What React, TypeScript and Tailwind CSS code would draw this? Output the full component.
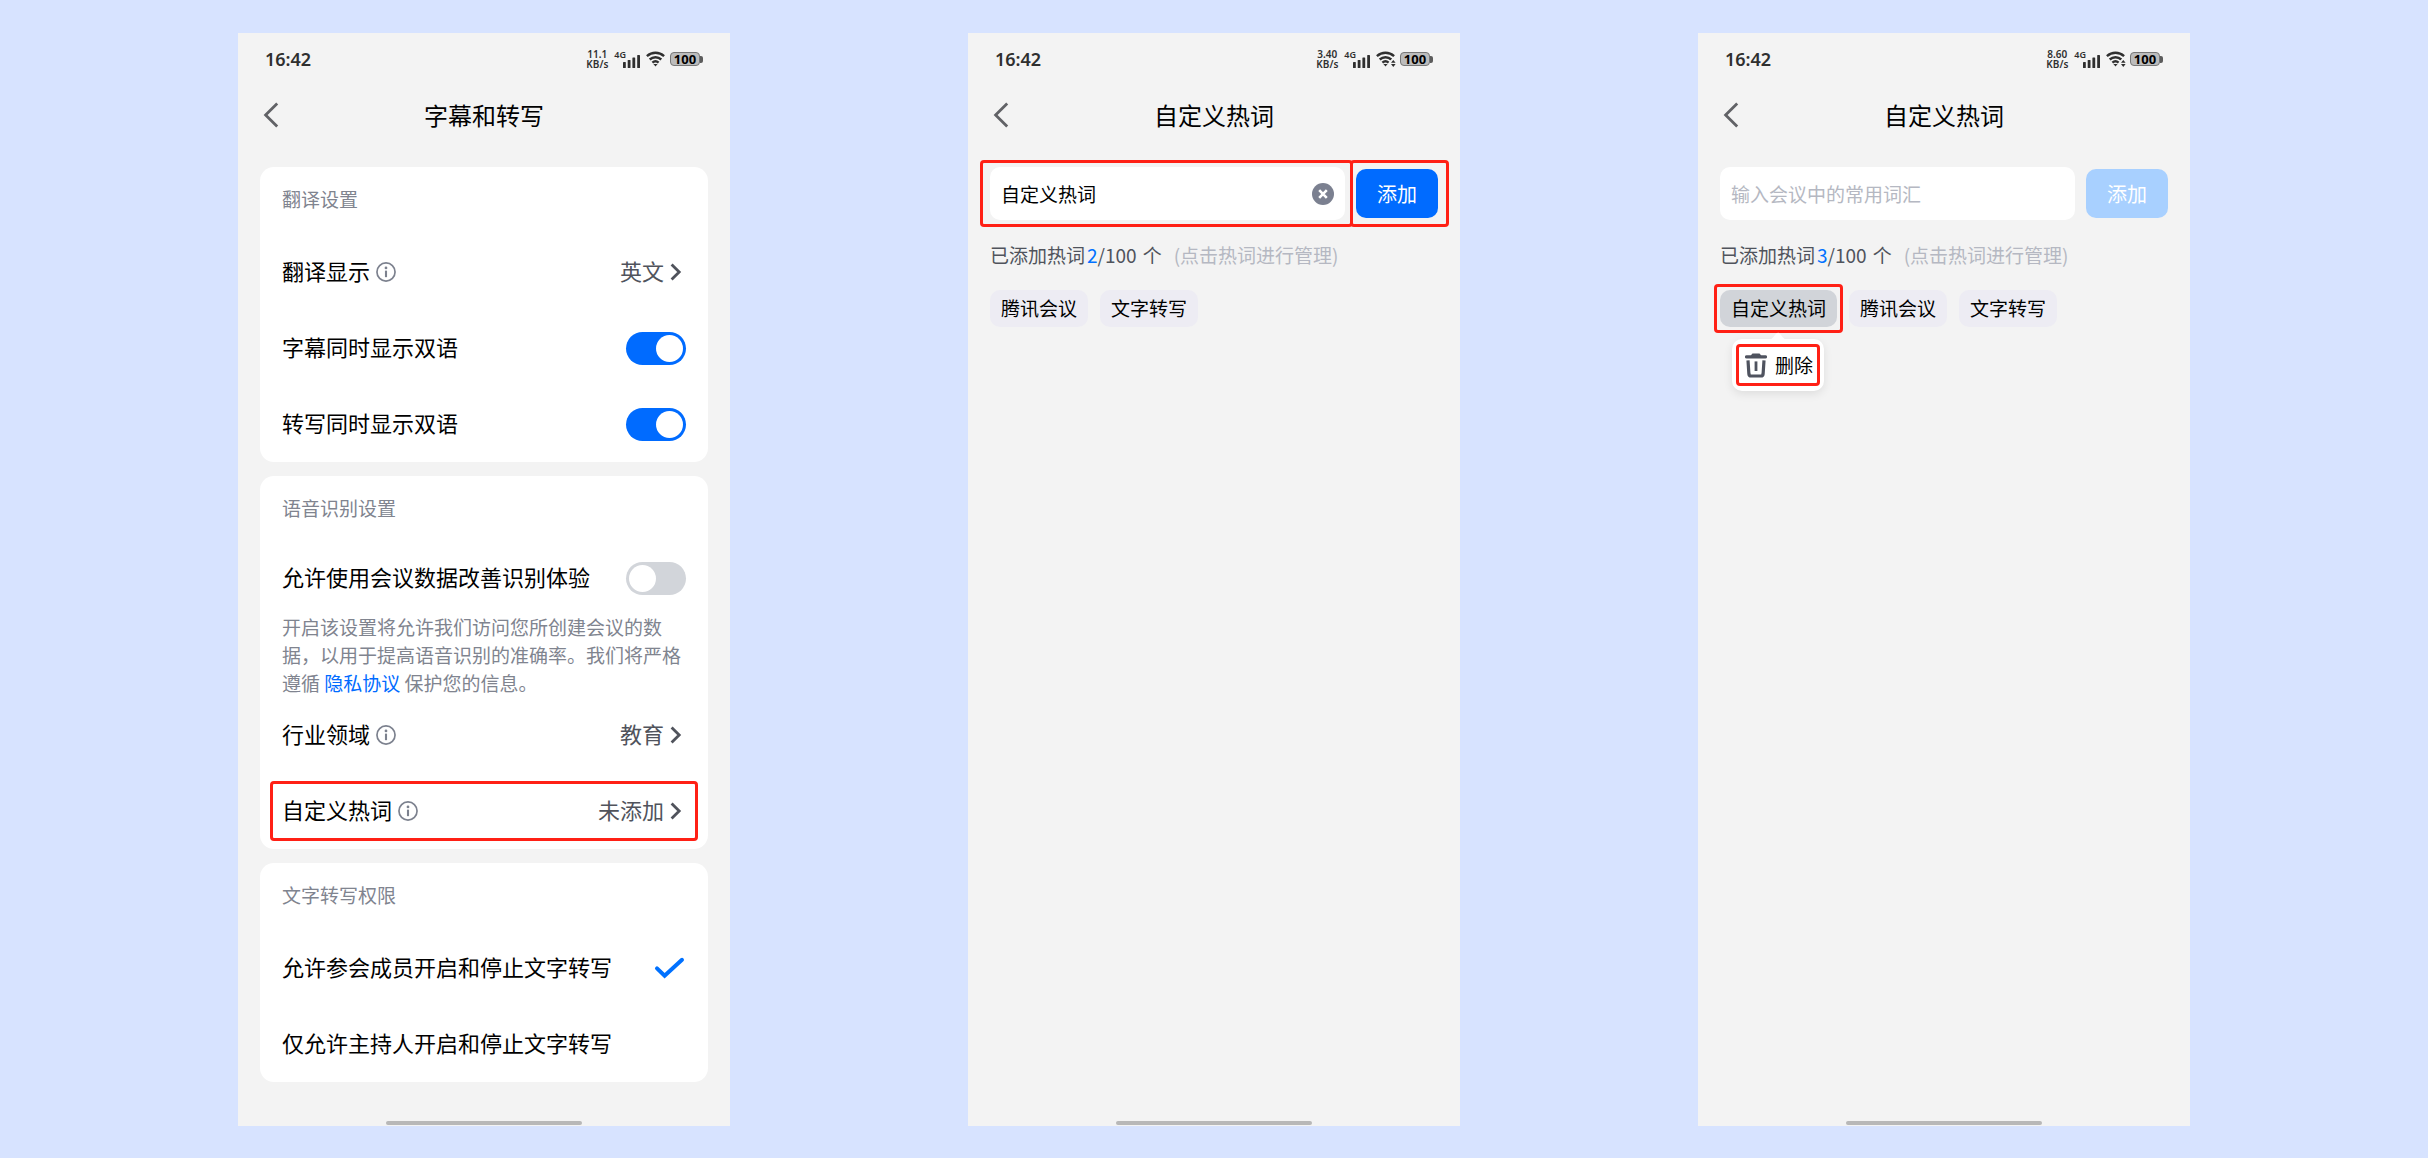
import { useState } from 'react';
import type { ReactNode } from 'react';

function Highlight({ className }: { className: string }) {
  return <span aria-hidden="true" className={`pointer-events-none absolute rounded-[4px] border-3 border-[#ff2015] ${className}`} />;
}

function WifiIcon({ active }: { active: boolean }) {
  return (
    <svg width="20" height="16" viewBox="0 0 20 16" fill="none" stroke="#2f2f2f" strokeWidth="2.4">
      <path d="M0.9 5.1C5.9 0.6 13.1 0.6 18.1 5.1" />
      <path d="M3.7 8.5C7.1 5.4 11.9 5.4 15.3 8.5" />
      <path d="M6.4 11.7C8.3 10 10.7 10 12.6 11.7" />
      <path d="M7.4 13L9.5 15.6L11.6 13Z" fill="#2f2f2f" stroke="none" />
      {active && (
        <>
          <circle cx="17.3" cy="12.4" r="3.9" fill="#f3f3f3" stroke="none" />
          <path d="M15 11.8L17.3 9L19.6 11.8ZM15 13.1L17.3 15.9L19.6 13.1Z" fill="#2f2f2f" stroke="none" />
        </>
      )}
    </svg>
  );
}

function StatusBar({ speed, active }: { speed: string; active: boolean }) {
  return (
    <div className="flex h-[52px] items-center justify-between px-[27px] font-['Noto_Sans','Open_Sans',sans-serif] text-[#2f2f2f]">
      <span className="text-lg font-semibold">16:42</span>
      <div className="flex items-center">
        <div className="flex flex-col items-center text-[10px] font-semibold leading-[10px]">
          <span>{speed}</span>
          <span>KB/s</span>
        </div>
        <div className="ml-1.5 flex h-[18px] items-end">
          <span className="-mr-[3px] self-start text-[9px] font-semibold leading-[9px]">4G</span>
          <svg width="17" height="13" viewBox="0 0 17 13" fill="#2f2f2f">
            <rect x="0" y="7" width="2.8" height="6" rx="0.6" />
            <rect x="4.7" y="5" width="2.8" height="8" rx="0.6" />
            <rect x="9.4" y="2.5" width="2.8" height="10.5" rx="0.6" />
            <rect x="14.2" y="0" width="2.8" height="13" rx="0.6" />
          </svg>
        </div>
        <div className="ml-1.5">
          <WifiIcon active={active} />
        </div>
        <div className="ml-1 flex items-center">
          <span className="flex h-3.5 w-[30px] items-center justify-center rounded-[4px] border border-[#777777] bg-[#bcbcbc] text-[13px] font-bold leading-none text-black">
            100
          </span>
          <span className="h-[7px] w-[3px] rounded-r-[2px] bg-[#5c5c5c]" />
        </div>
      </div>
    </div>
  );
}

function Phone({ title, speed, active = true, children }: { title: string; speed: string; active?: boolean; children: ReactNode }) {
  return (
    <section className="flex flex-col bg-[#f3f3f3]">
      <StatusBar speed={speed} active={active} />
      <header className="mb-[22px] grid h-[60px] grid-cols-[41px_1fr_41px] items-center">
        <button type="button" aria-label="返回" className="flex justify-end">
          <svg width="16" height="26" viewBox="0 0 16 26" fill="none" stroke="#616266" strokeWidth="2.8">
            <path d="M14.2 1.5L2.6 13L14.2 24.5" />
          </svg>
        </button>
        <h1 className="text-center text-2xl">{title}</h1>
      </header>
      <div className="flex-1 px-[22px] pb-9">{children}</div>
      <div className="mx-auto mb-px h-1 w-2/5 rounded-full bg-[#b8b8b8]" />
    </section>
  );
}

function Card({ title, children }: { title: string; children: ReactNode }) {
  return (
    <div className="rounded-[14px] bg-white px-[22px]">
      <h2 className="flex h-[67px] items-center pb-0.5 text-[19px] text-[#80848f]">{title}</h2>
      {children}
    </div>
  );
}

function SwitchRow({ label, on = false, className = 'h-[76px]' }: { label: string; on?: boolean; className?: string }) {
  const [checked, setChecked] = useState(on);

  return (
    <label className={`flex items-center justify-between ${className}`}>
      <span className="pb-1">{label}</span>
      <input
        type="checkbox"
        role="switch"
        checked={checked}
        onChange={(e) => setChecked(e.target.checked)}
        className="h-[33px] w-[60px] shrink-0 appearance-none rounded-full bg-[#d2d5da] p-[3px] before:block before:size-[27px] before:rounded-full before:bg-white checked:bg-[#006bff] checked:before:ml-[27px]"
      />
    </label>
  );
}

function LinkRow({ label, value, marked = false }: { label: string; value: string; marked?: boolean }) {
  return (
    <button type="button" className="relative flex h-[76px] w-full items-center">
      <span className="pb-1">{label}</span>
      <svg className="ml-1.5" width="20" height="20" viewBox="0 0 19 19" fill="none" stroke="#7c818e" strokeWidth="1.6">
        <circle cx="9.5" cy="9.5" r="8.6" />
        <circle cx="9.5" cy="5.6" r="1.3" fill="#7c818e" stroke="none" />
        <path d="M9.5 8.2V14.4" strokeWidth="2" />
      </svg>
      <span className="ml-auto pb-1 text-[#50535c]">{value}</span>
      <svg className="ml-1.5 mr-1" width="12" height="18" viewBox="0 0 12 18" fill="none" stroke="#50535c" strokeWidth="2.8">
        <path d="M1.6 1.4L9.2 9L1.6 16.6" />
      </svg>
      {marked && <Highlight className="-inset-x-3 inset-y-2" />}
    </button>
  );
}

const permissions = ['允许参会成员开启和停止文字转写', '仅允许主持人开启和停止文字转写'];

function SettingsScreen() {
  const [permission, setPermission] = useState(permissions[0]);

  return (
    <Phone title="字幕和转写" speed="11.1" active={false}>
      <div className="flex flex-col gap-3.5 text-[22px]">
        <Card title="翻译设置">
          <LinkRow label="翻译显示" value="英文" />
          <SwitchRow label="字幕同时显示双语" on />
          <SwitchRow label="转写同时显示双语" on />
        </Card>

        <Card title="语音识别设置">
          <SwitchRow label="允许使用会议数据改善识别体验" className="h-[70px]" />
          <p className="text-[19px] leading-[28px] text-[#80848f]">
            开启该设置将允许我们访问您所创建会议的数据，以用于提高语音识别的准确率。我们将严格遵循{' '}
            <a href="#privacy" className="text-[#006bff]">隐私协议</a> 保护您的信息。
          </p>
          <LinkRow label="行业领域" value="教育" />
          <LinkRow label="自定义热词" value="未添加" marked />
        </Card>

        <Card title="文字转写权限">
          {permissions.map((item) => (
            <label key={item} className="relative flex h-[76px] items-center justify-between">
              <span className="pb-1">{item}</span>
              <input
                type="radio"
                name="permission"
                checked={permission === item}
                onChange={() => setPermission(item)}
                className="sr-only"
              />
              {permission === item && (
                <svg width="32" height="24" viewBox="0 0 32 24" fill="none" stroke="#0071ff" strokeWidth="4" strokeLinecap="round">
                  <path d="M3 12.4L10.6 19.8L28 3.8" />
                </svg>
              )}
            </label>
          ))}
        </Card>
      </div>
    </Phone>
  );
}

function TrashIcon() {
  return (
    <svg width="22" height="25" viewBox="0 0 22 25" fill="none" stroke="#4f535f" strokeWidth="3.2">
      <path d="M1.5 3.9H20.5" strokeLinecap="round" />
      <path d="M6.6 2.9L7.6 1.4H14.4L15.4 2.9Z" strokeWidth="1.6" strokeLinejoin="round" />
      <path d="M3 7.4L3.9 21Q4.1 23 6 23H16Q17.9 23 18.1 21L19 7.4" />
      <path d="M11 8.4V18" strokeWidth="2.8" />
    </svg>
  );
}

type HotwordProps = {
  speed: string;
  initial: string;
  words: string[];
  selected?: string;
  marked?: boolean;
};

function HotwordScreen({ speed, initial, words, selected, marked = false }: HotwordProps) {
  const [text, setText] = useState(initial);

  return (
    <Phone title="自定义热词" speed={speed}>
      <form className="relative flex items-center gap-[11px]" onSubmit={(e) => e.preventDefault()}>
        <div className="flex h-[53px] min-w-0 flex-1 items-center rounded-[10px] bg-white px-[11px]">
          <input
            type="text"
            aria-label="热词"
            value={text}
            onChange={(e) => setText(e.target.value)}
            placeholder="输入会议中的常用词汇"
            className="h-full min-w-0 flex-1 bg-transparent text-[19px] outline-none placeholder:text-[#b5b8c2]"
          />
          {text && (
            <button type="button" aria-label="清除" onClick={() => setText('')}>
              <svg className="block" width="22" height="22" viewBox="0 0 22 22">
                <circle cx="11" cy="11" r="11" fill="#7b8090" />
                <path d="M7.2 7.2L14.8 14.8M14.8 7.2L7.2 14.8" stroke="white" strokeWidth="2.6" />
              </svg>
            </button>
          )}
        </div>
        <button type="submit" disabled={!text} className="h-[49px] w-[82px] rounded-[10px] bg-[#006bff] text-xl text-white disabled:bg-[#a8d0ff]">
          添加
        </button>
        {marked && (
          <>
            <Highlight className="-inset-y-[7px] -left-2.5 right-[85px]" />
            <Highlight className="-inset-y-[7px] -right-[11px] w-[99px]" />
          </>
        )}
      </form>

      <p className="flex h-[70px] items-center text-[19px] text-[#50535c]">
        已添加热词
        <span className="ml-0.5 text-[#0071ff]">{words.length}</span>/100
        <span className="ml-1.5">个</span>
        <span className="ml-3 text-[#b5b8c2]">(点击热词进行管理)</span>
      </p>

      <ul className="flex flex-wrap gap-3">
        {words.map((word) => (
          <li key={word} className="relative">
            <button
              type="button"
              className={`block h-[37px] rounded-[10px] px-[11px] text-[19px] ${word === selected ? 'bg-[#d1d4d9]' : 'bg-[#edecf3]'}`}
            >
              {word}
            </button>
            {word === selected && (
              <>
                <Highlight className="-inset-1.5" />
                <div className="absolute left-3 top-full mt-3 rounded-[10px] bg-white shadow-[0_3px_10px_rgba(0,0,0,0.09)]">
                  <svg className="absolute -top-[7px] left-1/2 -translate-x-1/2" width="18" height="8" viewBox="0 0 18 8" fill="white">
                    <path d="M0 8Q3 7.6 5.6 3.6Q9 -2 12.4 3.6Q15 7.6 18 8Z" />
                  </svg>
                  <button type="button" className="flex h-[52px] items-center gap-2 whitespace-nowrap pl-[13px] pr-[11px] text-[19px]">
                    <TrashIcon />
                    删除
                  </button>
                  <Highlight className="inset-x-1 inset-y-[5px]" />
                </div>
              </>
            )}
          </li>
        ))}
      </ul>
    </Phone>
  );
}

export default function App() {
  return (
    <main className="grid min-h-screen grid-cols-3 gap-x-[238px] bg-[#d7e3ff] px-[238px] pb-8 pt-[33px] font-['Noto_Sans_CJK_SC',sans-serif] text-black">
      <SettingsScreen />
      <HotwordScreen speed="3.40" initial="自定义热词" words={['腾讯会议', '文字转写']} marked />
      <HotwordScreen speed="8.60" initial="" words={['自定义热词', '腾讯会议', '文字转写']} selected="自定义热词" />
    </main>
  );
}
